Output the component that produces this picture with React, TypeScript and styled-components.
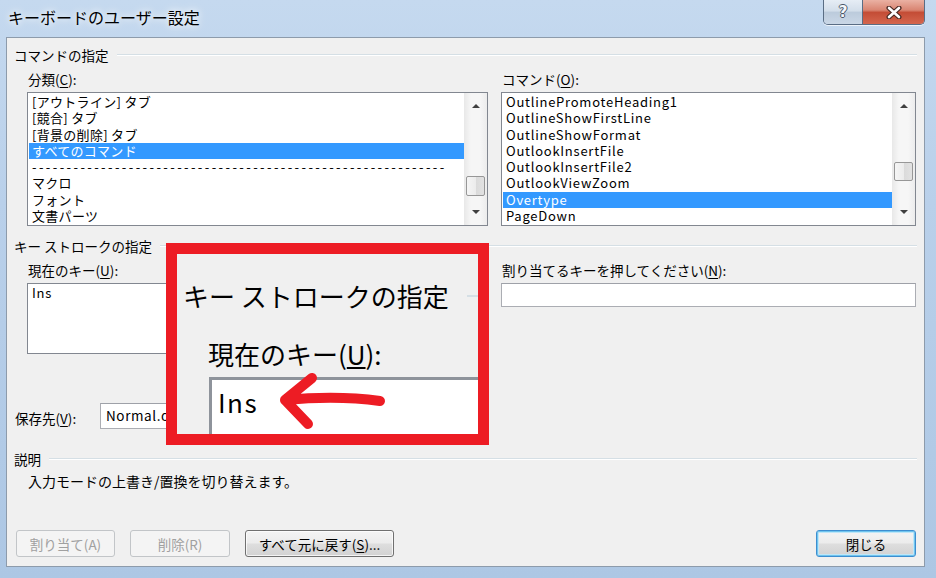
import React from "react";
import styled, { createGlobalStyle } from "styled-components";

const GlobalStyle = createGlobalStyle`
  *, *::before, *::after { box-sizing: border-box; }
  html, body { margin: 0; padding: 0; }
  body {
    width: 936px;
    height: 578px;
    overflow: hidden;
    font-family: "Noto Sans CJK JP", "Noto Sans", sans-serif;
    font-size: 13.5px;
    color: #000;
  }
`;

const Window = styled.div`
  width: 936px;
  height: 578px;
  padding: 0 11px 11px 6px;
  display: flex;
  flex-direction: column;
  background: linear-gradient(180deg, #c5d9ef 0%, #b9d0ea 35%, #adc7e4 100%);
`;

const TitleBar = styled.div`
  height: 37px;
  flex-shrink: 0;
  display: flex;
  align-items: flex-start;
`;

const Title = styled.div`
  margin: 6px 0 0 2px;
  font-size: 16px;
  line-height: 22px;
  text-shadow: 0 0 6px #fff, 0 0 12px rgba(255, 255, 255, 0.8);
`;

const CaptionButtons = styled.div`
  margin-left: auto;
  display: flex;
  height: 25px;
  border: 1px solid #5a6d84;
  border-top: none;
  border-radius: 0 0 5px 5px;
  overflow: hidden;
  box-shadow: 0 1px 0 rgba(255, 255, 255, 0.7);
`;

const CaptionButton = styled.div<{ $close?: boolean }>`
  width: ${(p) => (p.$close ? 62 : 38)}px;
  display: flex;
  align-items: center;
  justify-content: center;
  background: ${(p) =>
    p.$close
      ? "linear-gradient(180deg, #eab1a3 0%, #d98572 42%, #c44d36 52%, #d4664e 100%)"
      : "linear-gradient(180deg, #e6edf5 0%, #d3deea 45%, #bccbdc 52%, #cad7e6 100%)"};
  & + & {
    border-left: 1px solid #5a6d84;
  }
`;

const HelpMark = styled.span`
  font-family: "DejaVu Sans", sans-serif;
  font-weight: bold;
  font-size: 15px;
  line-height: 15px;
  color: #f4f7fb;
  text-shadow: 1px 0 0 #4a5668, -1px 0 0 #4a5668, 0 1px 0 #4a5668, 0 -1px 0 #4a5668;
`;

const Client = styled.div`
  flex: 1;
  position: relative;
  background: #f0f0f0;
  border: 1px solid #8d9bab;
  padding: 9px 7px 9px 7px;
  display: flex;
  flex-direction: column;
`;

const GroupHeader = styled.div<{ $gap?: number }>`
  display: flex;
  align-items: center;
  height: 16px;
  line-height: 16px;
  margin-top: ${(p) => p.$gap ?? 0}px;
  white-space: nowrap;
  &::after {
    content: "";
    flex: 1;
    margin-left: 8px;
    border-top: 1px solid #d5dfe5;
    border-bottom: 1px solid #fff;
  }
`;

const Columns = styled.div`
  display: grid;
  grid-template-columns: 461px 415px;
  column-gap: 13px;
  padding-left: 13px;
  align-items: start;
`;

const Label = styled.div`
  margin: 8px 0 5px 1px;
  height: 16px;
  line-height: 16px;
  white-space: nowrap;
`;

const Key = styled.span`
  text-decoration: underline;
  text-underline-offset: 2px;
`;

const ListBox = styled.div<{ $height: number }>`
  height: ${(p) => p.$height}px;
  border: 1px solid #828790;
  background: #fff;
  display: flex;
  overflow: hidden;
`;

const Items = styled.div<{ $latin?: boolean }>`
  flex: 1;
  padding-top: 1px;
  overflow: hidden;
  font-size: 13px;
  letter-spacing: ${(p) => (p.$latin ? "0.75px" : "0.3px")};
`;

const Item = styled.div<{ $selected?: boolean }>`
  height: 16.3px;
  line-height: 16.3px;
  margin-left: 1px;
  padding-left: 3px;
  white-space: nowrap;
  background: ${(p) => (p.$selected ? "#3399ff" : "transparent")};
  color: ${(p) => (p.$selected ? "#fff" : "#000")};
`;

const Dashes = styled(Item)`
  letter-spacing: 2.4px;
  overflow: hidden;
`;

const Scroll = styled.div`
  width: 23px;
  display: flex;
  flex-direction: column;
  background: linear-gradient(90deg, #e8e8e8 0%, #f6f6f6 30%, #f6f6f6 70%, #ececec 100%);
`;

const ArrowBox = styled.div`
  height: 26px;
  display: flex;
  align-items: center;
  justify-content: center;
`;

const Triangle = styled.div<{ $up?: boolean }>`
  width: 0;
  height: 0;
  border-left: 4px solid transparent;
  border-right: 4px solid transparent;
  ${(p) =>
    p.$up ? "border-bottom: 4px solid #404040;" : "border-top: 4px solid #404040;"}
`;

const Track = styled.div`
  flex: 1;
`;

const Thumb = styled.div<{ $top: number; $height: number }>`
  margin: ${(p) => p.$top}px 2px 0 2px;
  height: ${(p) => p.$height}px;
  border: 1px solid #979797;
  border-radius: 2px;
  background: linear-gradient(90deg, #f5f5f5 0%, #ececec 50%, #dadada 52%, #e2e2e2 100%);
`;

const Field = styled.div<{ $height: number; $width?: number }>`
  height: ${(p) => p.$height}px;
  width: ${(p) => (p.$width ? `${p.$width}px` : "auto")};
  background: #fff;
  border: 1px solid #abadb3;
  border-top-color: #9ea1a8;
  padding: 2px 5px;
  line-height: 19px;
  letter-spacing: 0.6px;
  white-space: nowrap;
  overflow: hidden;
`;

const SaveRow = styled.div`
  margin-top: 49px;
  padding-left: 1px;
  display: flex;
  align-items: center;
`;

const SaveLabel = styled.div`
  width: 85px;
  line-height: 16px;
  padding-top: 3px;
`;

const Description = styled.div`
  margin-top: 6px;
  padding-left: 14px;
  line-height: 16px;
  font-size: 14px;
`;

const ButtonRow = styled.div`
  margin-top: auto;
  display: flex;
  gap: 15px;
  padding: 0 1px 0 2px;
`;

const Button = styled.button<{ $width: number; $default?: boolean; $push?: boolean }>`
  width: ${(p) => p.$width}px;
  height: 27px;
  padding: 0;
  margin-left: ${(p) => (p.$push ? "auto" : "0")};
  font-family: inherit;
  font-size: 13.5px;
  border-radius: 3px;
  border: 1px solid ${(p) => (p.disabled ? "#c2c5c8" : p.$default ? "#3d8ed0" : "#707070")};
  color: ${(p) => (p.disabled ? "#a0a0a0" : "#000")};
  background: ${(p) =>
    p.disabled
      ? "#f4f4f4"
      : "linear-gradient(180deg, #f4f4f4 0%, #ececec 48%, #dedede 52%, #d2d2d2 100%)"};
  box-shadow: ${(p) =>
    p.$default
      ? "inset 0 0 0 1px #6fc4ee, inset 0 0 0 2px #bfe6f8"
      : p.disabled
      ? "none"
      : "inset 0 0 0 1px rgba(255,255,255,0.75)"};
`;

const ZoomPanel = styled.div`
  position: absolute;
  left: 159px;
  top: 205px;
  width: 323px;
  height: 202px;
  border: 11px solid #ed1c24;
  background: #f0f0f0;
  overflow: hidden;
`;

const ZoomHeader = styled.div`
  margin-top: 27px;
  padding-left: 6px;
  display: flex;
  align-items: center;
  font-size: 26px;
  line-height: 30px;
  white-space: nowrap;
  &::after {
    content: "";
    flex: 1;
    margin-left: 18px;
    border-top: 2px solid #d5dfe5;
  }
`;

const ZoomLabel = styled.div`
  margin-top: 28px;
  padding-left: 31px;
  font-size: 26px;
  line-height: 30px;
  white-space: nowrap;
`;

const ZoomBox = styled.div`
  margin: 8px 0 0 32px;
  width: 400px;
  height: 120px;
  background: #fff;
  border-top: 3px solid #8e939b;
  border-left: 3px solid #8e939b;
  padding: 7px 0 0 6px;
  font-size: 26px;
  line-height: 30px;
  letter-spacing: 1.5px;
`;

const Arrow = styled.svg`
  position: absolute;
  left: 0;
  top: 0;
`;

function ScrollBar({ top, height }: { top: number; height: number }) {
  return (
    <Scroll>
      <ArrowBox>
        <Triangle $up />
      </ArrowBox>
      <Track>
        <Thumb $top={top} $height={height} />
      </Track>
      <ArrowBox>
        <Triangle />
      </ArrowBox>
    </Scroll>
  );
}

const categories = [
  "[アウトライン] タブ",
  "[競合] タブ",
  "[背景の削除] タブ",
  "すべてのコマンド",
  "SEP",
  "マクロ",
  "フォント",
  "文書パーツ",
];

const commands = [
  "OutlinePromoteHeading1",
  "OutlineShowFirstLine",
  "OutlineShowFormat",
  "OutlookInsertFile",
  "OutlookInsertFile2",
  "OutlookViewZoom",
  "Overtype",
  "PageDown",
];

export default function App() {
  return (
    <>
      <GlobalStyle />
      <Window>
        <TitleBar>
          <Title>キーボードのユーザー設定</Title>
          <CaptionButtons>
            <CaptionButton>
              <HelpMark>?</HelpMark>
            </CaptionButton>
            <CaptionButton $close>
              <svg width="16" height="13" viewBox="0 0 16 13">
                <path d="M3 2 L13 11 M13 2 L3 11" stroke="#4a2a24" strokeWidth="5" strokeLinecap="round" />
                <path d="M3 2 L13 11 M13 2 L3 11" stroke="#fff" strokeWidth="2.6" strokeLinecap="round" />
              </svg>
            </CaptionButton>
          </CaptionButtons>
        </TitleBar>

        <Client>
          <GroupHeader>コマンドの指定</GroupHeader>
          <Columns>
            <div>
              <Label>
                分類(<Key>C</Key>):
              </Label>
              <ListBox $height={134}>
                <Items>
                  {categories.map((c, i) =>
                    c === "SEP" ? (
                      <Dashes key={i}>{"-".repeat(60)}</Dashes>
                    ) : (
                      <Item key={i} $selected={i === 3}>
                        {c}
                      </Item>
                    )
                  )}
                </Items>
                <ScrollBar top={57} height={20} />
              </ListBox>
            </div>
            <div>
              <Label>
                コマンド(<Key>O</Key>):
              </Label>
              <ListBox $height={134}>
                <Items $latin>
                  {commands.map((c, i) => (
                    <Item key={c} $selected={i === 6}>
                      {c}
                    </Item>
                  ))}
                </Items>
                <ScrollBar top={43} height={19} />
              </ListBox>
            </div>
          </Columns>

          <GroupHeader $gap={12}>キー ストロークの指定</GroupHeader>
          <Columns>
            <div>
              <Label>
                現在のキー(<Key>U</Key>):
              </Label>
              <ListBox $height={71}>
                <Items $latin>
                  <Item>Ins</Item>
                </Items>
              </ListBox>
            </div>
            <div>
              <Label>
                割り当てるキーを押してください(<Key>N</Key>):
              </Label>
              <Field $height={24} />
            </div>
          </Columns>
          <SaveRow>
            <SaveLabel>
              保存先(<Key>V</Key>):
            </SaveLabel>
            <Field $height={26} $width={240}>
              Normal.dotm
            </Field>
          </SaveRow>

          <GroupHeader $gap={22}>説明</GroupHeader>
          <Description>入力モードの上書き/置換を切り替えます。</Description>

          <ButtonRow>
            <Button $width={99} disabled>
              割り当て(A)
            </Button>
            <Button $width={100} disabled>
              削除(R)
            </Button>
            <Button $width={149}>
              すべて元に戻す(<Key>S</Key>)...
            </Button>
            <Button $width={100} $default $push>
              閉じる
            </Button>
          </ButtonRow>

          <ZoomPanel>
            <ZoomHeader>キー ストロークの指定</ZoomHeader>
            <ZoomLabel>
              現在のキー(<Key>U</Key>):
            </ZoomLabel>
            <ZoomBox>Ins</ZoomBox>
            <Arrow width="301" height="180" viewBox="0 0 301 180">
              <path
                d="M203 147 Q160 141 108 146 M135 124 L108 146 L131 170"
                fill="none"
                stroke="#ed1c24"
                strokeWidth="10"
                strokeLinecap="round"
                strokeLinejoin="round"
              />
            </Arrow>
          </ZoomPanel>
        </Client>
      </Window>
    </>
  );
}
